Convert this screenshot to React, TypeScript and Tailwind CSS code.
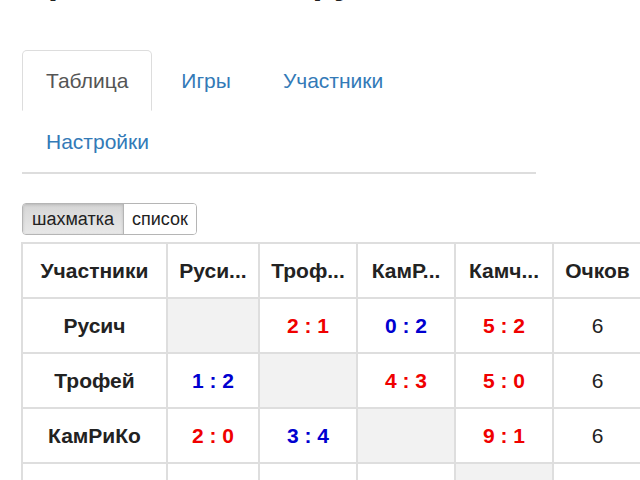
import React from "react";

type Cell = { score: string; win: boolean } | null;

const teams = ["Русич", "Трофей", "КамРиКо", "Камчатка"];

const grid: Cell[][] = [
  [null, { score: "2 : 1", win: true }, { score: "0 : 2", win: false }, { score: "5 : 2", win: true }],
  [{ score: "1 : 2", win: false }, null, { score: "4 : 3", win: true }, { score: "5 : 0", win: true }],
  [{ score: "2 : 0", win: true }, { score: "3 : 4", win: false }, null, { score: "9 : 1", win: true }],
  [{ score: "2 : 5", win: false }, { score: "0 : 5", win: false }, { score: "1 : 9", win: false }, null],
];

const points = [6, 6, 6, 0];

const short = (name: string) => (name.length > 4 ? name.slice(0, 4) + "..." : name);

const cellCls = "border-2 border-[#dedede] h-[55px] px-[8px] text-center align-middle";

export default function App() {
  return (
    <div className="min-h-[480px] bg-white font-['Liberation_Sans',Arial,sans-serif] text-[#333] overflow-hidden">
      <h1 className="mt-[-39px] h-[40px] px-[22px] text-[36px] leading-[40px] font-bold whitespace-nowrap text-[#222]">
        Пробный этап, группа Б
      </h1>

      {/* tabs */}
      <ul className="mx-[22px] mt-[49px] w-[514px] flex flex-wrap border-b-2 border-[#ddd] text-[21px] leading-[23px]">
        <li className="mr-[5px]">
          <span className="block px-[23px] py-[18px] border border-[#ddd] border-b-transparent rounded-t-[5px] text-[#555] bg-white">
            Таблица
          </span>
        </li>
        <li className="mr-[4px]">
          <span className="block px-[23px] py-[18px] border border-transparent text-[#337ab7]">Игры</span>
        </li>
        <li className="mr-[4px]">
          <span className="block px-[23px] py-[18px] border border-transparent text-[#337ab7]">Участники</span>
        </li>
        <li className="mr-[4px]">
          <span className="block px-[23px] py-[18px] border border-transparent text-[#337ab7]">Настройки</span>
        </li>
      </ul>

      {/* view switch */}
      <div className="ml-[22px] mt-[29px] inline-flex rounded-[4px] border border-[#b5b5b5] text-[18px] leading-[20px] text-[#222] overflow-hidden">
        <span className="px-[9px] py-[5px] bg-gradient-to-b from-[#d6d6d6] to-[#e8e8e8] border-r border-[#b5b5b5] shadow-[inset_0_1px_3px_rgba(0,0,0,0.15)]">
          шахматка
        </span>
        <span className="px-[8px] py-[5px] bg-white">список</span>
      </div>

      {/* crosstable */}
      <table className="ml-[21px] mt-[7px] table-fixed border-collapse w-[620px] text-[21px] leading-[24px]">
        <colgroup>
          <col className="w-[145px]" />
          <col className="w-[92px]" />
          <col className="w-[98px]" />
          <col className="w-[98px]" />
          <col className="w-[98px]" />
          <col className="w-[89px]" />
        </colgroup>
        <thead>
          <tr>
            <th className={`${cellCls} font-bold text-[#222]`}>Участники</th>
            {teams.map((t) => (
              <th key={t} className={`${cellCls} font-bold text-[#222] whitespace-nowrap`}>
                {short(t)}
              </th>
            ))}
            <th className={`${cellCls} font-bold text-[#222]`}>Очков</th>
          </tr>
        </thead>
        <tbody>
          {teams.map((t, i) => (
            <tr key={t}>
              <td className={`${cellCls} font-bold text-[#222]`}>{t}</td>
              {grid[i].map((c, j) =>
                c ? (
                  <td
                    key={j}
                    className={`${cellCls} font-bold ${c.win ? "text-[#f00000]" : "text-[#0000d0]"}`}
                  >
                    {c.score}
                  </td>
                ) : (
                  <td key={j} className={`${cellCls} bg-[#f2f2f2]`} />
                )
              )}
              <td className={`${cellCls} text-[#222]`}>{points[i]}</td>
            </tr>
          ))}
        </tbody>
      </table>
    </div>
  );
}
